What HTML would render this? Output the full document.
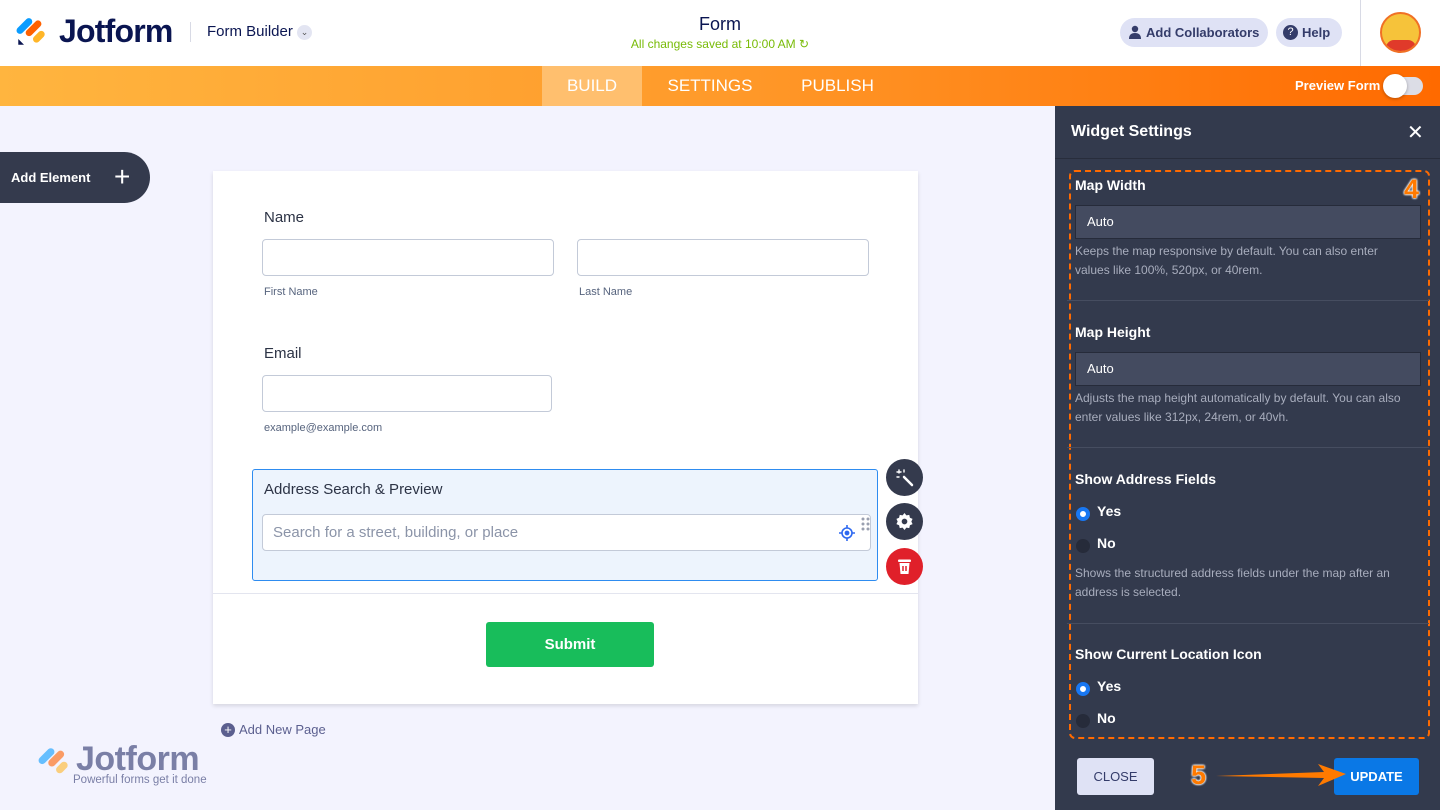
<!DOCTYPE html>
<html><head><meta charset="utf-8"><style>
*{box-sizing:border-box;margin:0;padding:0}
body{width:1440px;height:810px;overflow:hidden;font-family:"Liberation Sans",sans-serif;background:#f3f3fe;position:relative}
.abs{position:absolute}
.hdr{left:0;top:0;width:1440px;height:66px;background:#fff}
.bar{left:0;top:66px;width:1440px;height:40px;background:linear-gradient(90deg,#ffb53f,#ff9a2a 50%,#ff6a00)}
.tab{top:66px;height:40px;line-height:40px;color:#fff;font-size:17px;text-align:center}
.pill{background:#dfe2f5;border-radius:16px;height:29px;top:18px;font-size:13px;color:#343c6a;font-weight:bold;line-height:29px}
.panel{left:1055px;top:106px;width:385px;height:704px;background:#333a4d}
.lbl{color:#fff;font-weight:bold;font-size:14px}
.inp{background:#444b60;border:1px solid #262b3a;height:34px;color:#fff;font-size:13px;padding-left:11px;line-height:32px;width:346px;left:1075px}
.help{color:#a8adbd;font-size:12px;line-height:19px;left:1075px;width:338px}
.sep{left:1067px;width:362px;height:1px;background:#464d60}
.radio{width:14px;height:14px;border-radius:50%;left:1076px}
.rl{color:#fff;font-weight:bold;font-size:14px;left:1097px}
.fl{font-size:15px;color:#2c3345}
.fi{background:#fff;border:1px solid #c3cad8;border-radius:4px;height:37px}
.sub{font-size:11px;color:#57647e}
.circ{width:37px;height:37px;border-radius:50%;left:886px}
</style></head><body>
<div class="abs hdr"></div>
<svg class="abs" style="left:16px;top:15px" width="32" height="32" viewBox="0 0 28 28"><rect x="4" y="1" width="6" height="17" rx="3" transform="rotate(45 7 10)" fill="#0a9cff"/><rect x="12" y="3" width="6" height="17" rx="3" transform="rotate(45 15 12)" fill="#ff6100"/><rect x="17" y="13" width="6" height="12" rx="3" transform="rotate(45 20 19)" fill="#ffb629"/><path d="M2 21 L7 26 L2 26Z" fill="#0a1551"/></svg>
<div class="abs" style="left:59px;top:13px;font-size:32px;font-weight:bold;color:#0a1551;letter-spacing:-0.8px">Jotform</div>
<div class="abs" style="left:190px;top:22px;width:1px;height:20px;background:#d8dae5"></div>
<div class="abs" style="left:207px;top:23px;font-size:15px;color:#0a1551">Form Builder</div>
<div class="abs" style="left:297px;top:25px;width:15px;height:15px;border-radius:50%;background:#e3e5f2;font-size:9px;text-align:center;line-height:15px;color:#555">⌄</div>
<div class="abs" style="left:620px;top:14px;width:200px;text-align:center;font-size:18px;color:#0a1551">Form</div>
<div class="abs" style="left:610px;top:37px;width:220px;text-align:center;font-size:12px;color:#78bb07">All changes saved at 10:00 AM ↻</div>
<div class="abs pill" style="left:1120px;width:148px;padding-left:26px">Add Collaborators</div>
<svg class="abs" style="left:1128px;top:25px" width="14" height="14" viewBox="0 0 14 14"><circle cx="7" cy="4" r="3.2" fill="#343c6a"/><path d="M1 14 Q1 8 7 8 Q13 8 13 14Z" fill="#343c6a"/></svg>
<div class="abs pill" style="left:1276px;width:66px;padding-left:26px">Help</div>
<div class="abs" style="left:1283px;top:25px;width:15px;height:15px;border-radius:50%;background:#343c6a;color:#fff;font-size:11px;text-align:center;line-height:15px">?</div>
<div class="abs" style="left:1360px;top:0;width:1px;height:66px;background:#d8dae5"></div>
<div class="abs" style="left:1380px;top:12px;width:41px;height:41px;border-radius:50%;background:#f6c33a;border:2px solid #f07025;overflow:hidden"><div style="position:absolute;left:4px;top:26px;width:30px;height:14px;background:#e03a2a;border-radius:8px 8px 0 0"></div></div>
<div class="abs bar"></div>
<div class="abs tab" style="left:542px;width:100px;background:#ffbf6e">BUILD</div>
<div class="abs tab" style="left:650px;width:120px">SETTINGS</div>
<div class="abs tab" style="left:785px;width:105px">PUBLISH</div>
<div class="abs" style="left:1295px;top:78px;font-size:13px;color:#fff;font-weight:bold">Preview Form</div>
<div class="abs" style="left:1385px;top:77px;width:38px;height:18px;border-radius:9px;background:#dcdde6"></div>
<div class="abs" style="left:1383px;top:74px;width:24px;height:24px;border-radius:50%;background:#fff;box-shadow:0 1px 3px rgba(0,0,0,.3)"></div>

<div class="abs" style="left:0;top:152px;width:150px;height:51px;background:#343a4d;border-radius:0 26px 26px 0;color:#fff;font-weight:bold;font-size:13px;line-height:51px;padding-left:11px">Add Element<span style="position:absolute;left:114px;top:-1px;font-size:28px;font-weight:normal">+</span></div>

<div class="abs" style="left:213px;top:171px;width:705px;height:533px;background:#fff;box-shadow:0 2px 4px rgba(0,0,0,.12)"></div>
<div class="abs fl" style="left:264px;top:209px">Name</div>
<div class="abs fi" style="left:262px;top:239px;width:292px"></div>
<div class="abs fi" style="left:577px;top:239px;width:292px"></div>
<div class="abs sub" style="left:264px;top:286px">First Name</div>
<div class="abs sub" style="left:579px;top:286px">Last Name</div>
<div class="abs fl" style="left:264px;top:345px">Email</div>
<div class="abs fi" style="left:262px;top:375px;width:290px"></div>
<div class="abs sub" style="left:264px;top:422px">example@example.com</div>
<div class="abs" style="left:252px;top:469px;width:626px;height:112px;background:#edf4fd;border:1px solid #2e8cf0;border-radius:3px"></div>
<div class="abs fl" style="left:264px;top:481px">Address Search &amp; Preview</div>
<div class="abs fi" style="left:262px;top:514px;width:609px;height:37px;color:#8b94a8;font-size:15px;line-height:35px;padding-left:10px">Search for a street, building, or place</div>
<svg class="abs" style="left:839px;top:525px" width="16" height="16" viewBox="0 0 16 16" fill="none" stroke="#2e69f0" stroke-width="1.6"><circle cx="8" cy="8" r="5"/><circle cx="8" cy="8" r="1.6" fill="#2e69f0"/><path d="M8 0v3M8 13v3M0 8h3M13 8h3"/></svg>
<svg class="abs" style="left:861px;top:517px" width="9" height="16" fill="#9aa0b0"><circle cx="2" cy="2" r="1.5"/><circle cx="7" cy="2" r="1.5"/><circle cx="2" cy="7" r="1.5"/><circle cx="7" cy="7" r="1.5"/><circle cx="2" cy="12" r="1.5"/><circle cx="7" cy="12" r="1.5"/></svg>
<div class="abs circ" style="top:459px;background:#343a4d"></div>
<svg class="abs" style="left:895px;top:468px" width="20" height="20" fill="none" stroke="#fff" stroke-width="2.5" stroke-linecap="round"><path d="M9 9l8 8"/><path d="M4 2v3M2 4h4M9 2v2M2 9h2" stroke-width="1.4"/></svg>
<div class="abs circ" style="top:503px;background:#343a4d"></div>
<svg class="abs" style="left:895px;top:512px" width="19" height="19" viewBox="0 0 20 20"><path fill="#fff" d="M10 1l2 2.5 3-.5.7 3 2.8 1.3-1.3 2.7 1.3 2.7-2.8 1.3-.7 3-3-.5L10 19l-2-2.5-3 .5-.7-3L1.5 12.7 2.8 10 1.5 7.3 4.3 6 5 3l3 .5z"/><circle cx="10" cy="10" r="3" fill="#343a4d"/></svg>
<div class="abs circ" style="top:548px;background:#e0202a"></div>
<svg class="abs" style="left:897px;top:558px" width="15" height="17" viewBox="0 0 15 17"><rect x="1" y="1.5" width="13" height="2.5" rx="1" fill="#fff"/><path d="M2.5 5h10l-1 11h-8z" fill="#fff"/><path d="M6 8v5M9 8v5" stroke="#e0202a" stroke-width="1.5"/></svg>
<div class="abs" style="left:213px;top:593px;width:705px;height:1px;background:#e3e5ef"></div>
<div class="abs" style="left:486px;top:622px;width:168px;height:45px;background:#18bd5b;border-radius:3px;color:#fff;font-weight:bold;font-size:15px;text-align:center;line-height:45px">Submit</div>
<div class="abs" style="left:221px;top:723px;width:14px;height:14px;border-radius:50%;background:#5b5f8f;color:#fff;font-size:13px;line-height:13px;text-align:center">+</div>
<div class="abs" style="left:239px;top:722px;font-size:13px;color:#5b5f8f">Add New Page</div>
<svg class="abs" style="left:38px;top:744px;opacity:.6" width="34" height="34" viewBox="0 0 28 28"><rect x="4" y="2" width="6" height="16" rx="3" transform="rotate(45 7 10)" fill="#0a9cff"/><rect x="12" y="4" width="6" height="16" rx="3" transform="rotate(45 15 12)" fill="#ff6100"/><rect x="17" y="14" width="6" height="11" rx="3" transform="rotate(45 20 19)" fill="#ffb629"/></svg>
<div class="abs" style="left:76px;top:740px;font-size:34px;font-weight:bold;color:#7a7fa6;letter-spacing:-0.5px">Jotform</div>
<div class="abs" style="left:73px;top:774px;font-size:11.5px;color:#7a7fa6">Powerful forms get it done</div>

<div class="abs panel"></div>
<div class="abs" style="left:1071px;top:123px;color:#fff;font-weight:bold;font-size:16px">Widget Settings</div>
<div class="abs" style="left:1407px;top:120px;color:#fff;font-size:20px">✕</div>
<div class="abs" style="left:1055px;top:158px;width:385px;height:1px;background:#282d3c"></div>
<div class="abs" style="left:1069px;top:170px;width:361px;height:569px;border:2px dashed #ff6a00;border-radius:6px"></div>
<div class="abs" style="left:1404px;top:174px;color:#ff7a00;font-weight:bold;font-size:27px;text-shadow:0 0 2px #fff,0 0 2px #fff,0 0 2px #fff">4</div>
<div class="abs lbl" style="left:1075px;top:177px">Map Width</div>
<div class="abs inp" style="top:205px">Auto</div>
<div class="abs help" style="top:242px">Keeps the map responsive by default. You can also enter values like 100%, 520px, or 40rem.</div>
<div class="abs sep" style="top:300px"></div>
<div class="abs lbl" style="left:1075px;top:324px">Map Height</div>
<div class="abs inp" style="top:352px">Auto</div>
<div class="abs help" style="top:389px">Adjusts the map height automatically by default. You can also enter values like 312px, 24rem, or 40vh.</div>
<div class="abs sep" style="top:447px"></div>
<div class="abs lbl" style="left:1075px;top:471px">Show Address Fields</div>
<div class="abs radio" style="top:507px;background:#fff;border:4px solid #1877f2"></div><div class="abs rl" style="top:503px">Yes</div>
<div class="abs radio" style="top:539px;background:#262b3a"></div><div class="abs rl" style="top:535px">No</div>
<div class="abs help" style="top:564px">Shows the structured address fields under the map after an address is selected.</div>
<div class="abs sep" style="top:623px"></div>
<div class="abs lbl" style="left:1075px;top:646px">Show Current Location Icon</div>
<div class="abs radio" style="top:682px;background:#fff;border:4px solid #1877f2"></div><div class="abs rl" style="top:678px">Yes</div>
<div class="abs radio" style="top:714px;background:#262b3a"></div><div class="abs rl" style="top:710px">No</div>
<div class="abs" style="left:1077px;top:758px;width:77px;height:37px;background:#dfe2f5;border-radius:3px;color:#343c6a;font-size:13px;text-align:center;line-height:37px">CLOSE</div>
<div class="abs" style="left:1334px;top:758px;width:85px;height:37px;background:#0a78e6;border-radius:3px;color:#fff;font-weight:bold;font-size:13px;text-align:center;line-height:37px">UPDATE</div>
<div class="abs" style="left:1191px;top:760px;color:#ff7a00;font-weight:bold;font-size:27px;text-shadow:0 0 2px #fff,0 0 2px #fff,0 0 2px #fff">5</div>
<svg class="abs" style="left:1214px;top:760px" width="134" height="30"><path d="M2 16 L110 12 L104 4 L132 14 L104 26 L110 18 Z" fill="#ff7a00"/></svg>
</body></html>
